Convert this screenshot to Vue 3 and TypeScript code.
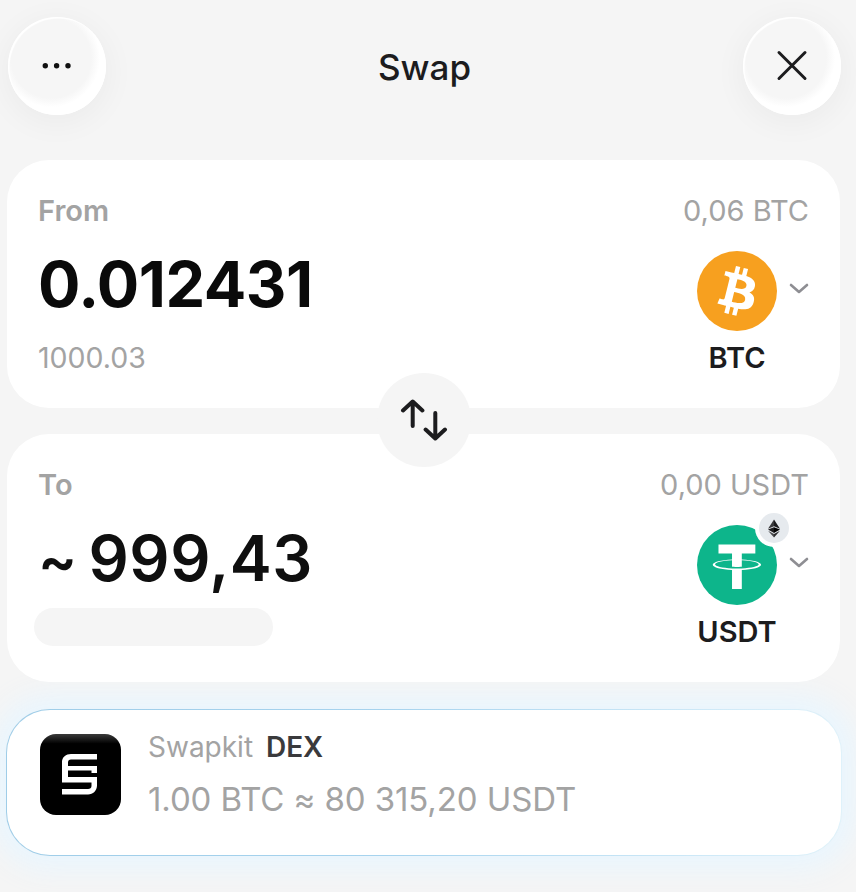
<script setup lang="ts">
const providerRate = '1.00 BTC ≈ 80 315,20 USDT'
</script>

<template>
  <div class="page">
    <header class="top-bar">
      <button type="button" class="round-btn" aria-label="More">
        <svg width="30" height="8" viewBox="0 0 30 8" fill="#111">
          <circle cx="3.300" cy="3.700" r="2.700" />
          <circle cx="14.600" cy="3.700" r="2.700" />
          <circle cx="26" cy="3.700" r="2.700" />
        </svg>
      </button>
      <h1 class="title">Swap</h1>
      <button type="button" class="round-btn" aria-label="Close">
        <svg width="32" height="32" viewBox="0 0 32 32" fill="none" stroke="#1c1c1e" stroke-width="3" stroke-linecap="round">
          <path d="M3 2.500l26 26M29 2.500L3 28.500" />
        </svg>
      </button>
    </header>

    <div class="swap-stack">
      <section class="card">
        <div class="row-top">
          <span class="label">From</span>
          <span class="balance">0,06 BTC</span>
        </div>
        <div class="row-main">
          <div class="amounts">
            <div class="amount">0.012431</div>
            <div class="fiat">1000.03</div>
          </div>
          <div class="token">
            <div class="token-pick">
              <svg class="coin" viewBox="0 0 32 32">
                <circle cx="16" cy="16" r="16" fill="#f7a01f" />
                <path
                  fill="#fff"
                  d="M23.189 14.02c.314-2.096-1.283-3.223-3.465-3.975l.708-2.84-1.728-.43-.69 2.765c-.454-.114-.92-.22-1.385-.326l.695-2.783L15.596 6l-.708 2.839c-.376-.086-.746-.17-1.104-.26l.002-.009-2.384-.595-.46 1.846s1.283.294 1.256.312c.7.175.826.638.805 1.006l-.806 3.235c.048.012.11.03.18.057l-.183-.045-1.13 4.532c-.086.212-.303.531-.793.41.018.025-1.256-.313-1.256-.313l-.858 1.978 2.25.561c.418.105.828.215 1.231.318l-.715 2.872 1.727.43.708-2.84c.472.127.93.245 1.378.357l-.706 2.828 1.728.43.715-2.866c2.948.558 5.164.333 6.097-2.333.752-2.146-.037-3.385-1.588-4.192 1.13-.26 1.98-1.003 2.207-2.538zm-3.95 5.538c-.533 2.147-4.148.986-5.32.695l.95-3.805c1.172.293 4.929.872 4.37 3.11zm.535-5.569c-.487 1.953-3.495.96-4.47.717l.86-3.45c.975.243 4.118.696 3.61 2.733z"
                />
              </svg>
              <svg class="chevron" viewBox="0 0 20 12" fill="none" stroke="#8e8e93" stroke-width="2.6" stroke-linecap="round" stroke-linejoin="round">
                <path d="M2 2l8 7 8-7" />
              </svg>
            </div>
            <div class="symbol">BTC</div>
          </div>
        </div>
      </section>

      <section class="card">
        <div class="row-top">
          <span class="label">To</span>
          <span class="balance">0,00 USDT</span>
        </div>
        <div class="row-main">
          <div class="amounts">
            <div class="amount amount-to"><span class="tilde">~</span>999,43</div>
            <div class="skeleton"></div>
          </div>
          <div class="token">
            <div class="token-pick">
              <div class="coin-wrap">
                <svg class="coin" viewBox="0 0 32 32">
                  <circle cx="16" cy="16" r="16" fill="#0db58b" />
                  <path
                    fill="#fff"
                    d="M17.922 17.383v-.002c-.11.008-.677.042-1.942.042-1.01 0-1.721-.03-1.971-.042v.003c-3.888-.171-6.79-.848-6.79-1.658 0-.809 2.902-1.486 6.79-1.66v2.644c.254.018.982.061 1.988.061 1.207 0 1.812-.05 1.925-.06v-2.643c3.88.173 6.775.85 6.775 1.658 0 .81-2.895 1.485-6.775 1.657m0-3.59v-2.366h5.414V7.819H8.595v3.608h5.414v2.365c-4.4.202-7.709 1.074-7.709 2.118 0 1.044 3.309 1.915 7.709 2.118v7.582h3.913v-7.584c4.393-.202 7.694-1.073 7.694-2.116 0-1.043-3.301-1.914-7.694-2.117"
                  />
                </svg>
                <span class="chain-badge">
                  <svg width="12" height="19" viewBox="0 0 16 24">
                    <path fill="#3a3a3c" d="M8 0L0 12.2 8 9z" />
                    <path fill="#1c1c1e" d="M8 0l8 12.2L8 9z" />
                    <path fill="#1c1c1e" d="M8 10.2L0 13.4l8 4.600z" />
                    <path fill="#000" d="M8 10.2l8 3.200-8 4.600z" />
                    <path fill="#4a4a4c" d="M0 15l8 9v-4.600z" />
                    <path fill="#2c2c2e" d="M16 15l-8 9v-4.600z" />
                  </svg>
                </span>
              </div>
              <svg class="chevron" viewBox="0 0 20 12" fill="none" stroke="#8e8e93" stroke-width="2.6" stroke-linecap="round" stroke-linejoin="round">
                <path d="M2 2l8 7 8-7" />
              </svg>
            </div>
            <div class="symbol">USDT</div>
          </div>
        </div>
      </section>

      <button type="button" class="flip-btn" aria-label="Flip tokens">
        <svg width="48" height="42" viewBox="0 0 48 42" fill="none" stroke="#1c1c1e" stroke-width="4" stroke-linecap="round" stroke-linejoin="round">
          <path d="M12.700 27V3M3 11.500L12.700 2.500l9.700 9" />
          <path d="M35.300 14v24.500M25.600 30.500l9.700 9 9.700-9" />
        </svg>
      </button>
    </div>

    <section class="provider">
      <svg class="provider-logo" viewBox="0 0 81 81">
        <defs>
          <linearGradient id="logo-fill" x1="0" y1="0" x2="0" y2="1">
            <stop offset="0" stop-color="#3a3a3a" />
            <stop offset="0.12" stop-color="#000" />
          </linearGradient>
        </defs>
        <rect width="81" height="81" rx="16" fill="url(#logo-fill)" />
        <path
          fill="#fff"
          d="M31 20h26v5.500H31c-2 0-3 1-3 3v3.500h29v7h-5.500v-2.500H28v6.500h29v8.500c0 5-4 9-9 9H22v-5.500h26c2 0 3.500-1 3.500-3v-3.500H22V28c0-5 4-8 9-8z"
        />
      </svg>
      <div class="provider-text">
        <div class="provider-name">Swapkit <b>DEX</b></div>
        <div class="provider-rate">{{ providerRate }}</div>
      </div>
    </section>
  </div>
</template>

<style scoped>
.page {
  width: 856px;
  height: 892px;
  overflow: hidden;
  background: #f5f5f5;
  font-family: Inter, "Liberation Sans", sans-serif;
  color: #111;
}

/* header */
.top-bar {
  display: flex;
  justify-content: space-between;
  align-items: flex-start;
  height: 150px;
  overflow: hidden;
  padding: 17px 15px 0 8px;
  box-sizing: border-box;
}

.round-btn {
  display: flex;
  align-items: center;
  justify-content: center;
  width: 98px;
  height: 98px;
  padding: 0;
  border: none;
  border-radius: 50%;
  background: radial-gradient(circle 50px at 44% 42%, #f6f6f6 80%, #fff 98%);
  box-shadow:
    0 6px 30px 4px rgba(0, 0, 0, 0.04),
    inset 1.500px 1.500px 1px #fff,
    inset -1px -1px 1px #fff;
}

.title {
  margin: 30px 0 0;
  font-size: 35px;
  line-height: 40px;
  font-weight: 500;
  color: #1c1c1e;
}

/* swap cards */
.swap-stack {
  position: relative;
  display: flex;
  flex-direction: column;
  gap: 26px;
  margin-top: 10px;
  padding: 0 16px 0 7px;
}

.card {
  height: 248px;
  box-sizing: border-box;
  padding: 33px 31px 0;
  background: #fff;
  border-radius: 42px;
}

.row-top {
  display: flex;
  justify-content: space-between;
  align-items: center;
  height: 34px;
}

.label {
  font-size: 29px;
  font-weight: 600;
  color: #a3a3a3;
}

.balance {
  font-size: 29px;
  color: #a3a3a3;
}

.row-main {
  display: flex;
  justify-content: space-between;
  margin-top: 24px;
}

.amount {
  height: 62px;
  padding-top: 2px;
  font-size: 63px;
  line-height: 62px;
  font-weight: 700;
  letter-spacing: -0.5px;
  color: #0a0a0a;
}

.amount-to {
  font-weight: 600;
  letter-spacing: 0.5px;
  color: #0f0f0f;
}

.tilde {
  margin-right: 11px;
  font-size: 58px;
}

.fiat {
  margin-top: 26px;
  font-size: 28.500px;
  line-height: 34px;
  color: #a3a3a3;
}

.skeleton {
  width: 239px;
  height: 38px;
  margin: 19px 0 0 -4px;
  border-radius: 19px;
  background: #f5f5f5;
}

.token {
  display: flex;
  flex-direction: column;
  align-items: flex-start;
}

.token-pick {
  display: flex;
  align-items: center;
  gap: 12px;
}

.coin {
  display: block;
  width: 80px;
  height: 80px;
}

.coin-wrap {
  position: relative;
  width: 80px;
  height: 80px;
}

.chain-badge {
  position: absolute;
  top: -12px;
  right: -12px;
  display: flex;
  align-items: center;
  justify-content: center;
  width: 30px;
  height: 30px;
  border-radius: 50%;
  background: #e6eaee;
  box-shadow: 0 0 0 4px #fff;
}

.chevron {
  width: 20px;
  height: 12px;
  margin-top: -5px;
}

.symbol {
  width: 80px;
  margin-top: 10px;
  font-size: 29px;
  line-height: 34px;
  font-weight: 600;
  white-space: nowrap;
  display: flex;
  justify-content: center;
  color: #1c1c1e;
}

.flip-btn {
  position: absolute;
  top: 213px;
  left: 377px;
  display: flex;
  align-items: center;
  justify-content: center;
  width: 94px;
  height: 94px;
  padding: 0;
  border: none;
  border-radius: 50%;
  background: #f5f5f5;
}

/* provider */
.provider {
  display: flex;
  align-items: flex-start;
  gap: 27px;
  box-sizing: border-box;
  height: 147px;
  margin: 27px 14px 0 6px;
  padding: 24px 33px;
  border: 1px solid transparent;
  border-radius: 44px;
  background:
    linear-gradient(#fff, #fff) padding-box,
    linear-gradient(90deg, #9fcde8 0%, #a6d3ee 45%, #dff2fb 100%) border-box;
  box-shadow: 0 0 26px 14px rgba(232, 246, 255, 0.85);
}

.provider-logo {
  flex: none;
  width: 81px;
  height: 81px;
}

.provider-text {
  margin-top: -4px;
}

.provider-name {
  font-size: 28px;
  line-height: 34px;
  color: #a3a3a3;
}

.provider-name b {
  margin-left: 5px;
  font-weight: 600;
  color: #3a3a3c;
}

.provider-rate {
  margin-top: 15px;
  font-size: 33px;
  line-height: 40px;
  letter-spacing: -0.1px;
  color: #a3a3a3;
}
</style>
